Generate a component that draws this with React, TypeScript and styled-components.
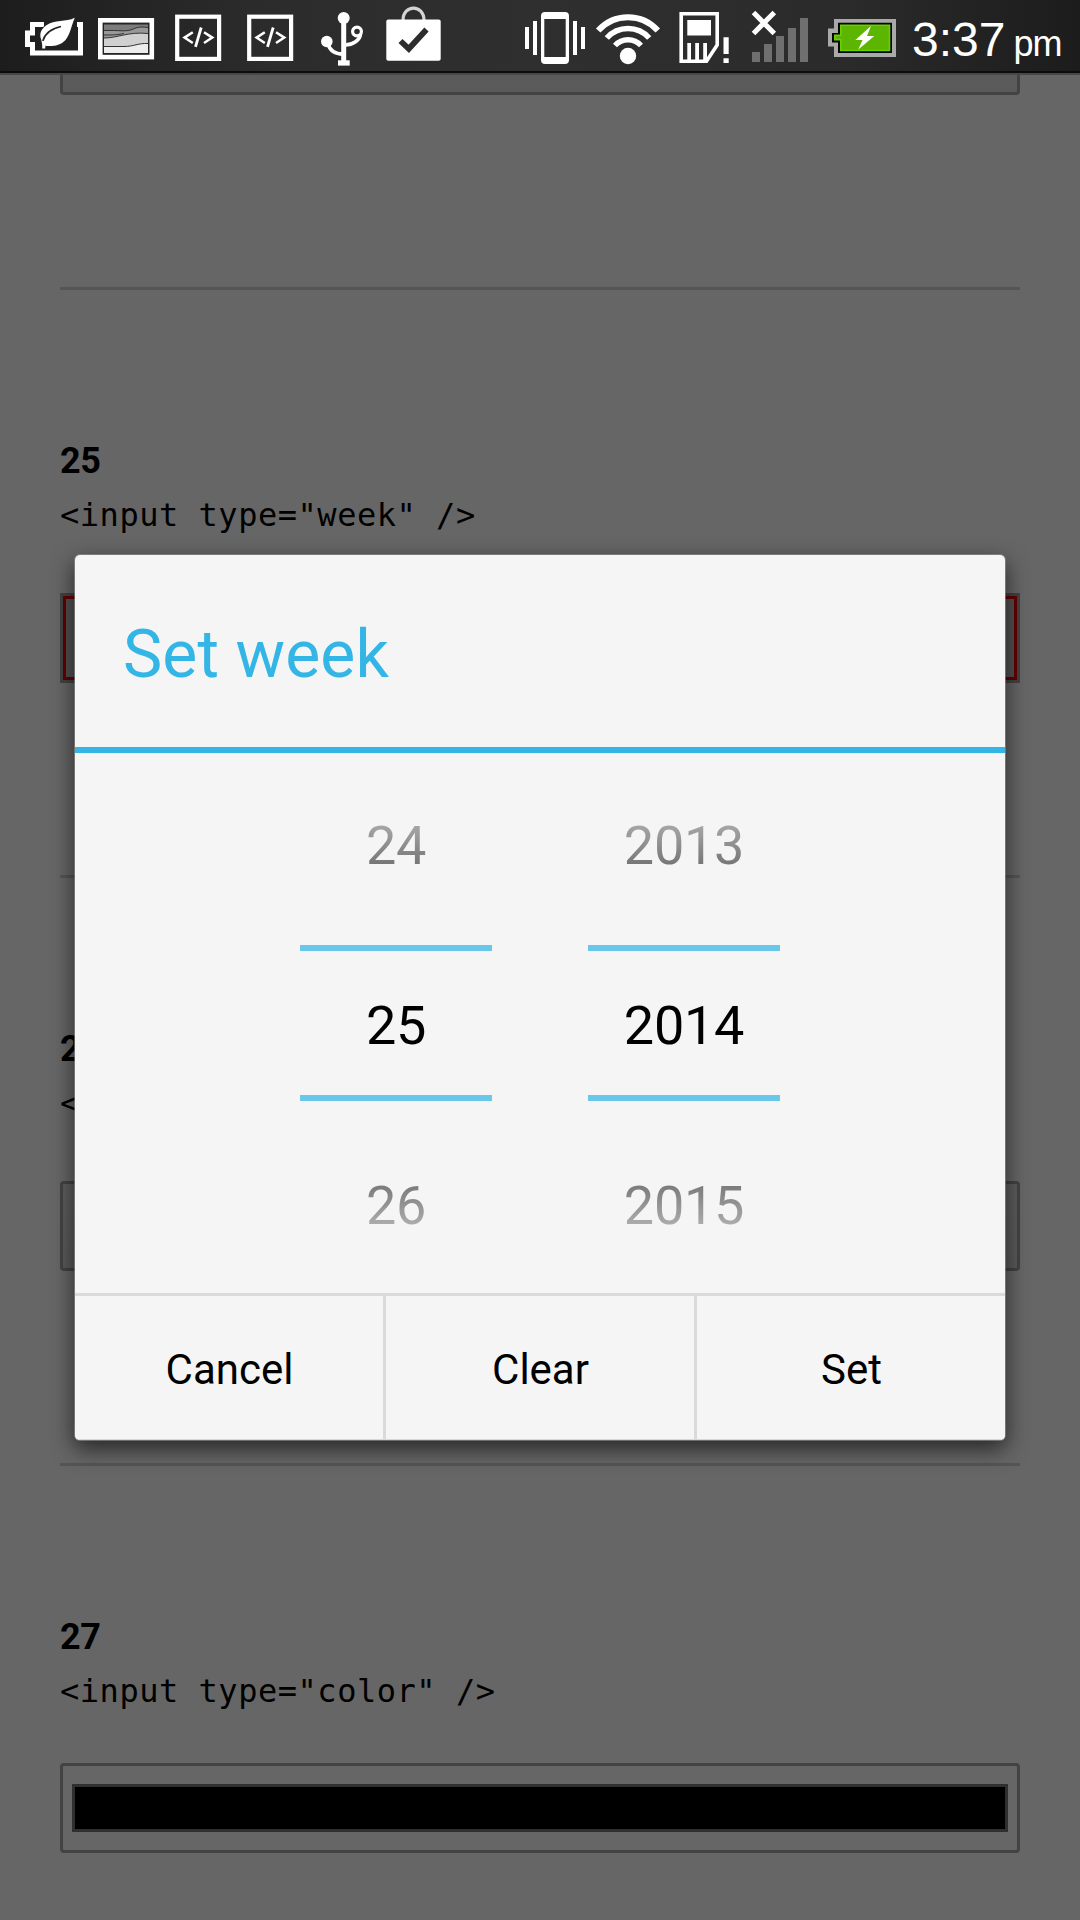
import React from "react";
import styled, { createGlobalStyle, css } from "styled-components";

const GlobalStyle = createGlobalStyle`
  * { box-sizing: border-box; }
  body { margin: 0; background: #666; }
`;

const Screen = styled.div`
  position: relative;
  display: flex;
  flex-direction: column;
  width: 1080px;
  height: 1920px;
  overflow: hidden;
  background: #666;
  color: #000;
  font-family: Roboto, sans-serif;
`;

/* ---------- status bar ---------- */

const StatusBar = styled.header`
  position: relative;
  z-index: 1;
  flex: none;
  display: flex;
  height: 73px;
  padding-left: 20px;
  border-bottom: 2px solid #0c0c0c;
  background: linear-gradient(90deg, #1d1d1d, #2c2c2c 25%, #2f2f2f 50%, #2b2b2b 78%, #1c1c1c);
  box-shadow: 0 2px 0 #474747;
`;

const IconGroup = styled.div<{ $offset?: number }>`
  display: flex;
  margin-left: ${(p) => p.$offset ?? 0}px;
`;

const Glyph = styled.svg`
  display: block;
  flex: none;
  height: 71px;
`;

const Clock = styled.div`
  padding-left: 8px;
  color: #fff;
  font: 48px/79px "Liberation Sans", Arial, sans-serif;
  white-space: nowrap;
`;

const Meridiem = styled.span`
  margin-left: 8px;
  font-size: 36px;
  letter-spacing: -1px;
`;

/* Each status glyph is drawn in the bar's own coordinates, in a slot from x to x + w. */
const Slot = ({ x, w, children }: { x: number; w: number; children: React.ReactNode }) => (
  <Glyph width={w} viewBox={`${x} 0 ${w} 71`} fill="#fff" stroke="none">
    {children}
  </Glyph>
);

const LeafBattery = () => (
  <Slot x={20} w={70}>
    <path
      d="M44 24.5H32.5V33H27.5V44.5H32.5V53H80.5V24.5H77"
      fill="none"
      stroke="#fff"
      strokeWidth="5"
    />
    <path
      d="M74.8 17.8C66 22.5 55 19 46 25.5C40 30 39.5 35 41.2 39.5C42 43 42.5 45.5 42.2 48.6H45.2L45.4 45.8C52 46.6 60 46 65.5 40C70.5 34 71.5 25 74.8 17.8Z"
      stroke="#262626"
      strokeWidth="2"
      paintOrder="stroke"
    />
    <path d="M42.8 41C44.5 34.5 50 29 61 26.5" fill="none" stroke="#262626" strokeWidth="1.6" />
  </Slot>
);

const Picture = () => (
  <Slot x={90} w={74}>
    <rect x="100.3" y="20.3" width="51.5" height="36.8" fill="none" stroke="#fff" strokeWidth="4.6" />
    <path d="M104 24.5H148V53H104Z" fill="#7c7c7c" />
    <path d="M104 30.5C118 30 126 32 132 29.5S140 26.5 148 27.5V53H104Z" fill="#989898" />
    <path d="M104 38C118 38 128 31.5 148 33.5V53H104Z" fill="#d0d0d0" />
    <path d="M104 46.5H124C134 46.5 138 43 148 43.5V53H104Z" fill="#ececec" />
    <path
      d="M104 30.5C118 30 126 32 132 29.5S140 26.5 148 27.5M104 35C114 35 116 35 124 33.5M104 38C118 38 128 31.5 148 33.5M104 46.5H124C134 46.5 138 43 148 43.5"
      fill="none"
      stroke="#333"
      strokeWidth="1"
    />
  </Slot>
);

const CodeBox = ({ x, w, left }: { x: number; w: number; left: number }) => (
  <Slot x={x} w={w}>
    <g transform={`translate(${left} 0)`} fill="none" stroke="#fff">
      <rect x="2.2" y="16.7" width="41.9" height="42.2" strokeWidth="4.2" />
      <path d="M17.8 32.2L9.5 37.6L17.8 43M29 32.2L37.3 37.6L29 43" strokeWidth="2.5" />
      <path d="M26.2 27.5L20.5 46.8" strokeWidth="2.8" />
    </g>
  </Slot>
);

const Usb = () => (
  <Slot x={304} w={72}>
    <circle cx="343.7" cy="18" r="6" />
    <rect x="341.2" y="18" width="5" height="44" />
    <rect x="338" y="60.3" width="11.7" height="5.3" />
    <circle cx="326.8" cy="41.5" r="5.8" />
    <g fill="none" stroke="#fff">
      <path d="M328 44C330 51 336 54 343 54" strokeWidth="3.6" />
      <circle cx="357" cy="31.5" r="4.4" strokeWidth="3.2" />
      <path d="M360.5 34C360 40 353 45 345 45" strokeWidth="3.6" />
    </g>
  </Slot>
);

const PlayBag = () => (
  <Slot x={376} w={76}>
    <path d="M403 20.5C403 4 424 4 424 20.5" fill="none" stroke="#d4d4d4" strokeWidth="3.2" />
    <rect x="386.3" y="19.5" width="54.4" height="41.2" rx="2" />
    <path d="M400.5 41L408.8 48.8L426.5 29.5" fill="none" stroke="#2d2d2d" strokeWidth="5.8" />
  </Slot>
);

const Vibrate = () => (
  <Slot x={516} w={74}>
    <path
      fillRule="evenodd"
      d="M545 12H565Q569 12 569 16V60Q569 64 565 64H545Q541 64 541 60V16Q541 12 545 12ZM544.3 19V57H565.7V19Z"
    />
    <path d="M525 27H529V49H525ZM533 21H537V55H533ZM573 21H577V55H573ZM581 27H585V49H581Z" />
  </Slot>
);

const Wifi = () => (
  <Slot x={590} w={78}>
    <circle cx="628" cy="56" r="8.2" />
    <g fill="none" stroke="#fff">
      <path d="M598.2 30.5A40 40 0 0 1 657.8 30.5" strokeWidth="6" />
      <path d="M606.8 38A28.5 28.5 0 0 1 649.2 38" strokeWidth="5.6" />
      <path d="M615 45.5A17.5 17.5 0 0 1 641 45.5" strokeWidth="5.4" />
    </g>
  </Slot>
);

const SimWarning = () => (
  <Slot x={668} w={72}>
    <path d="M681.2 13.8H717.2V45L706.5 61.2H681.2Z" fill="none" stroke="#fff" strokeWidth="3.6" />
    <path d="M687.3 20H711V35.5H687.3ZM687.3 43H691V60H687.3ZM695.2 43H699V60H695.2ZM703.2 43H707V60H703.2Z" />
    <path d="M723.5 37.3H728.7V54H723.5ZM723.5 58.2H728.7V63H723.5Z" />
  </Slot>
);

const NoSignal = () => (
  <Slot x={740} w={80}>
    <path d="M753.5 12.5L774.3 33.5M774.3 12.5L753.5 33.5" stroke="#fff" strokeWidth="5" />
    <path
      d="M752 52H760V62H752ZM764 44H772V62H764ZM776 36H784V62H776ZM788 28H796V62H788ZM800 18H808V62H800Z"
      fill="#6f6f6f"
    />
  </Slot>
);

const ChargingBattery = () => (
  <Slot x={820} w={84}>
    <path d="M834 19H896V57H834V46.5H828V28.5H834Z" fill="#a9a9a9" />
    <path d="M838 22.8H892V53H838V42.5H832V33H838Z" fill="#050505" />
    <path
      d="M840.8 25.3H889.5V50.5H840.8V39.8H834.8V35.3H840.8Z"
      fill="#5cb500"
      stroke="#6ad000"
      strokeWidth="1.6"
    />
    <path d="M871 26L855.3 40H862.5L858.3 49.5L874.3 36H867Z" />
  </Slot>
);

/* ---------- page behind the dialog ---------- */

const Page = styled.main`
  flex: 1;
  overflow: hidden;
  padding: 0 60px;
`;

const Sample = styled.section`
  display: flex;
  flex-direction: column;
  height: 588px;
  padding-top: 150px;
  border-top: 3px solid #555;
`;

const ScrolledSample = styled.section`
  display: flow-root;
  height: 214px;
`;

const Ordinal = styled.h2`
  margin: 0 0 6px;
  font-size: 36px;
  line-height: 42px;
  font-weight: 700;
  letter-spacing: -0.3px;
`;

type FieldKind = "plain" | "focused" | "color";

const Code = styled.code<{ $kind: FieldKind }>`
  margin-bottom: ${(p) => (p.$kind === "color" ? 45 : 51)}px;
  font: 32px/54px "DejaVu Sans Mono", monospace;
  letter-spacing: 0.53px;
  white-space: pre;
`;

const Field = styled.div<{ $kind: FieldKind }>`
  height: 90px;
  border: 3px solid #434343;
  border-radius: 4px;
  background: linear-gradient(#5e5e5e, #5a5a5a);
  ${(p) =>
    p.$kind === "focused" &&
    css`
      border-radius: 0;
      background: #525252;
      box-shadow: inset 0 0 0 3px #640000;
    `}
  ${(p) =>
    p.$kind === "color" &&
    css`
      padding: 18px 9px;
      background: #666;
    `}
`;

const ScrolledField = styled(Field)`
  margin-top: -68px;
`;

const Swatch = styled.div`
  height: 48px;
  border: 3px solid #303030;
  background: #000;
`;

/* ---------- dialog ---------- */

const Dialog = styled.div`
  position: absolute;
  top: 555px;
  left: 75px;
  z-index: 2;
  display: flex;
  flex-direction: column;
  width: 930px;
  height: 885px;
  overflow: hidden;
  border-radius: 5px;
  background: #f5f5f5;
  box-shadow: 0 0 0 1px rgba(150, 150, 150, 0.6), 0 8px 22px 1px rgba(0, 0, 0, 0.62);
`;

const DialogTitle = styled.h1`
  flex: none;
  height: 198px;
  margin: 0;
  padding: 7px 48px 0;
  border-bottom: 6px solid #33b5e5;
  color: #33b5e5;
  font-size: 66px;
  font-weight: 400;
  line-height: 185px;
  letter-spacing: 0.1px;
`;

const Pickers = styled.div`
  display: flex;
  justify-content: center;
  gap: 96px;
  height: 540px;
`;

const Wheel = styled.div`
  display: grid;
  grid-template-rows: 192px 156px 192px;
  width: 192px;
  font-size: 54px;
  letter-spacing: -0.25px;
  text-align: center;
`;

const Neighbour = styled.div<{ $side: "before" | "after" }>`
  padding: ${(p) => (p.$side === "before" ? "0 0 7px" : "17px 0 0")};
  color: transparent;
  line-height: ${(p) => (p.$side === "before" ? 185 : 175)}px;
  background: linear-gradient(
    ${(p) => (p.$side === "before" ? "to bottom" : "to top")},
    rgba(0, 0, 0, 0) 10px,
    rgba(0, 0, 0, 0.93) 192px
  );
  -webkit-background-clip: text;
  background-clip: text;
`;

const Selected = styled.div`
  padding-top: 5px;
  border: solid #69c8ea;
  border-width: 6px 0;
  line-height: 139px;
`;

const Actions = styled.div`
  display: grid;
  grid-template-columns: repeat(3, 308px);
  column-gap: 3px;
  height: 147px;
  padding-top: 3px;
  background: #dadada;
`;

const Action = styled.button`
  padding: 4px 0 0 1px;
  border: 0;
  background: #f5f5f5;
  box-shadow: inset 0 -1px 0 #d8d8d8;
  color: #000;
  font: 42px/48px Roboto, sans-serif;
`;

const samples: { id: number; type: string; kind: FieldKind }[] = [
  { id: 25, type: "week", kind: "focused" },
  { id: 26, type: "number", kind: "plain" },
  { id: 27, type: "color", kind: "color" },
];

const wheels = [
  ["24", "25", "26"],
  ["2013", "2014", "2015"],
];

export default function App() {
  return (
    <Screen>
      <GlobalStyle />
      <StatusBar>
        <IconGroup>
          <LeafBattery />
          <Picture />
          <CodeBox x={164} w={68} left={175} />
          <CodeBox x={232} w={72} left={247} />
          <Usb />
          <PlayBag />
        </IconGroup>
        <IconGroup $offset={64}>
          <Vibrate />
          <Wifi />
          <SimWarning />
          <NoSignal />
          <ChargingBattery />
        </IconGroup>
        <Clock>
          3:37<Meridiem>pm</Meridiem>
        </Clock>
      </StatusBar>

      <Page>
        <ScrolledSample>
          <ScrolledField $kind="plain" />
        </ScrolledSample>
        {samples.map(({ id, type, kind }) => (
          <Sample key={id}>
            <Ordinal>{id}</Ordinal>
            <Code $kind={kind}>{`<input type="${type}" />`}</Code>
            <Field $kind={kind}>{kind === "color" && <Swatch />}</Field>
          </Sample>
        ))}
      </Page>

      <Dialog role="dialog">
        <DialogTitle>Set week</DialogTitle>
        <Pickers>
          {wheels.map(([before, current, after]) => (
            <Wheel key={current}>
              <Neighbour $side="before">{before}</Neighbour>
              <Selected>{current}</Selected>
              <Neighbour $side="after">{after}</Neighbour>
            </Wheel>
          ))}
        </Pickers>
        <Actions>
          <Action>Cancel</Action>
          <Action>Clear</Action>
          <Action>Set</Action>
        </Actions>
      </Dialog>
    </Screen>
  );
}
